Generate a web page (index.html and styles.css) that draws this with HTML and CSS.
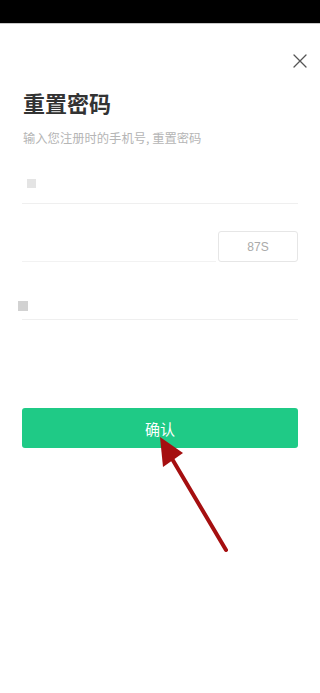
FILE: index.html
```html
<!DOCTYPE html>
<html lang="zh-CN">
<head>
<meta charset="utf-8">
<meta name="viewport" content="width=device-width, initial-scale=1">
<title>重置密码</title>
<link rel="stylesheet" href="styles.css">
</head>
<body>
<div class="status"></div>
<div class="page">
  <div class="top">
    <svg class="close" width="14" height="14" viewBox="0 0 14 14" aria-label="关闭">
      <path d="M1 1 L13 13 M13 1 L1 13" stroke="#555" stroke-width="1.3" fill="none" stroke-linecap="round"/>
    </svg>
  </div>
  <div class="content">
    <h1 class="title">重置密码</h1>
    <p class="subtitle">输入您注册时的手机号, 重置密码</p>
    <div class="field field-phone"><span class="dot dot-light"></span></div>
    <div class="field-code">
      <div class="code-input"></div>
      <div class="code-btn">87S</div>
    </div>
    <div class="field field-pwd"><span class="dot dot-dark"></span></div>
    <button class="confirm">确认</button>
  </div>
  <svg class="arrow" width="320" height="693" viewBox="0 0 320 693">
    <line x1="226" y1="550" x2="168" y2="452" stroke="#a50f10" stroke-width="4" stroke-linecap="round"/>
    <polygon points="160,437 183,453 163,467" fill="#a50f10"/>
  </svg>
</div>
</body>
</html>
```
FILE: styles.css
```css
* { box-sizing: border-box; }
html, body {
  margin: 0;
  padding: 0;
  background: #fff;
  font-family: "Noto Sans CJK SC", "Noto Sans", "Liberation Sans", sans-serif;
}
.status {
  height: 24px;
  background: #000;
  border-bottom: 1px solid #c8c8c8;
}
.page {
  position: relative;
  height: 669px;
  overflow: hidden;
}
.top {
  display: flex;
  justify-content: flex-end;
  padding: 30px 13px 0 0;
}
.close { display: block; }
.content {
  padding: 0 22px;
  display: flex;
  flex-direction: column;
}
.title {
  margin: 19px 0 0 1px;
  font-size: 22px;
  line-height: 30px;
  font-weight: 700;
  color: #333;
}
.subtitle {
  margin: 12px 0 0 1px;
  font-size: 12.3px;
  line-height: 18px;
  color: #b5b5b5;
}
.field {
  display: flex;
  align-items: center;
  border-bottom: 1px solid #efefef;
}
.field-phone {
  height: 57px;
  padding-top: 17px;
}
.dot {
  display: block;
  width: 9px;
  height: 9px;
}
.dot-light {
  background: #e4e4e4;
  margin-left: 5px;
}
.dot-dark {
  background: #d2d2d2;
  margin-left: -4px;
  width: 10px;
  height: 10px;
}
.field-code {
  display: flex;
  align-items: flex-end;
  margin-top: 27px;
  gap: 2px;
}
.code-input {
  flex: 1;
  border-bottom: 1px solid #f2f2f2;
}
.code-btn {
  width: 80px;
  height: 31px;
  border: 1px solid #e6e6e6;
  border-radius: 3px;
  display: flex;
  align-items: center;
  justify-content: center;
  font-family: "Liberation Sans", "Noto Sans", sans-serif;
  font-size: 12px;
  color: #aaa;
}
.field-pwd {
  height: 30px;
  margin-top: 28px;
  padding-top: 3px;
}
.confirm {
  margin-top: 88px;
  height: 40px;
  border: none;
  border-radius: 3px;
  background: #1fca86;
  color: #fff;
  font-family: "Noto Sans CJK SC", sans-serif;
  font-size: 15px;
  padding: 0;
}
.arrow {
  position: absolute;
  top: -24px;
  left: 0;
  pointer-events: none;
}
```
